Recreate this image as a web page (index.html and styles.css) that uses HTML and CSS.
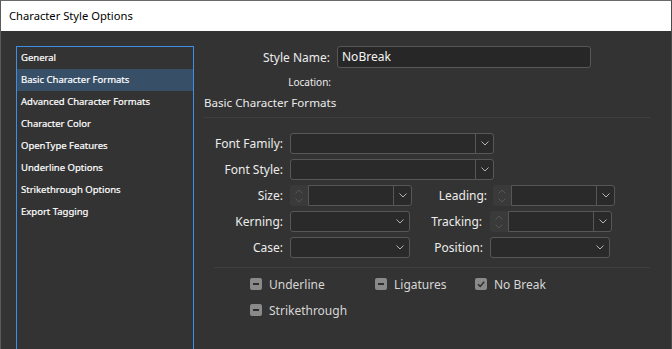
FILE: index.html
```html
<!DOCTYPE html>
<html>
<head>
<meta charset="utf-8">
<link rel="stylesheet" href="styles.css">
</head>
<body>
<div class="window">
  <div class="titlebar">Character Style Options</div>
  <div class="content">
    <ul class="nav">
      <li>General</li>
      <li class="active">Basic Character Formats</li>
      <li>Advanced Character Formats</li>
      <li>Character Color</li>
      <li>OpenType Features</li>
      <li>Underline Options</li>
      <li>Strikethrough Options</li>
      <li>Export Tagging</li>
    </ul>
    <div class="panel">
      <div class="name-row">
        <span class="name-label">Style Name:</span>
        <div class="text-input">NoBreak</div>
      </div>
      <div class="loc-row"><span class="loc-label">Location:</span></div>
      <div class="section-title">Basic Character Formats</div>
      <div class="rule"></div>
      <div class="form">
        <div class="frow">
          <span class="flabel">Font Family:</span>
          <div class="combo wide"><div class="field"></div><div class="arrow split"><svg viewBox="0 0 8 5"><path d="M0.5 0.5 L4 4 L7.5 0.5"/></svg></div></div>
        </div>
        <div class="frow">
          <span class="flabel">Font Style:</span>
          <div class="combo wide"><div class="field"></div><div class="arrow split"><svg viewBox="0 0 8 5"><path d="M0.5 0.5 L4 4 L7.5 0.5"/></svg></div></div>
        </div>
        <div class="frow">
          <span class="flabel">Size:</span>
          <div class="spin-combo">
            <div class="spinner"><svg viewBox="0 0 8 14"><path d="M0.5 4.5 L4 1 L7.5 4.5 M0.5 9.5 L4 13 L7.5 9.5"/></svg></div>
            <div class="combo attached"><div class="field"></div><div class="arrow split"><svg viewBox="0 0 8 5"><path d="M0.5 0.5 L4 4 L7.5 0.5"/></svg></div></div>
          </div>
          <span class="flabel right r1">Leading:</span>
          <div class="spin-combo">
            <div class="spinner"><svg viewBox="0 0 8 14"><path d="M0.5 4.5 L4 1 L7.5 4.5 M0.5 9.5 L4 13 L7.5 9.5"/></svg></div>
            <div class="combo attached"><div class="field"></div><div class="arrow split"><svg viewBox="0 0 8 5"><path d="M0.5 0.5 L4 4 L7.5 0.5"/></svg></div></div>
          </div>
        </div>
        <div class="frow">
          <span class="flabel">Kerning:</span>
          <div class="combo narrow"><div class="field"></div><div class="arrow"><svg viewBox="0 0 8 5"><path d="M0.5 0.5 L4 4 L7.5 0.5"/></svg></div></div>
          <span class="flabel right r2">Tracking:</span>
          <div class="spin-combo">
            <div class="spinner"><svg viewBox="0 0 8 14"><path d="M0.5 4.5 L4 1 L7.5 4.5 M0.5 9.5 L4 13 L7.5 9.5"/></svg></div>
            <div class="combo attached"><div class="field"></div><div class="arrow split"><svg viewBox="0 0 8 5"><path d="M0.5 0.5 L4 4 L7.5 0.5"/></svg></div></div>
          </div>
        </div>
        <div class="frow">
          <span class="flabel">Case:</span>
          <div class="combo narrow"><div class="field"></div><div class="arrow"><svg viewBox="0 0 8 5"><path d="M0.5 0.5 L4 4 L7.5 0.5"/></svg></div></div>
          <span class="flabel right r3">Position:</span>
          <div class="combo narrow"><div class="field"></div><div class="arrow"><svg viewBox="0 0 8 5"><path d="M0.5 0.5 L4 4 L7.5 0.5"/></svg></div></div>
        </div>
      </div>
      <div class="rule rule2"></div>
      <div class="checks">
        <div class="crow">
          <label class="check c1"><span class="box mixed"></span>Underline</label>
          <label class="check c2"><span class="box mixed"></span>Ligatures</label>
          <label class="check"><span class="box"><svg viewBox="0 0 10 10"><path d="M2 5.2 L4.2 7.4 L8.2 2.8"/></svg></span>No Break</label>
        </div>
        <div class="crow">
          <label class="check"><span class="box mixed"></span>Strikethrough</label>
        </div>
      </div>
    </div>
  </div>
</div>
</body>
</html>
```
FILE: styles.css
```css
* { box-sizing: border-box; }
html, body { margin: 0; padding: 0; }
body {
  width: 672px;
  height: 349px;
  overflow: hidden;
  background: #333333;
  font-family: "Noto Sans", "Open Sans", sans-serif;
}
.window {
  height: 349px;
  border-left: 1px solid #5b5b5b;
  border-right: 1px solid #4a4a4a;
  border-top: 1px solid #6a6a6a;
  display: flex;
  flex-direction: column;
}
.titlebar {
  height: 30px;
  background: #ffffff;
  color: #000;
  font-size: 11.2px;
  padding-left: 8px;
  line-height: 30px;
  flex: none;
}
.content {
  flex: 1;
  display: flex;
  padding-top: 15px;
  background: #333333;
}
.nav {
  list-style: none;
  margin: 0 0 0 15px;
  padding: 0;
  width: 178px;
  border: 1px solid #3d8ee6;
  border-bottom: none;
  flex: none;
  font-family: "Noto Sans", sans-serif;
  font-size: 9.5px;
  color: #ffffff;
  -webkit-text-stroke: 0.2px #ffffff;
}
.nav li {
  height: 22px;
  line-height: 22px;
  padding-left: 4px;
}
.nav li.active { background: #384f68; }
.panel {
  flex: 1;
  padding-left: 10px;
  color: #ececec;
  font-size: 12px;
}
.name-row {
  display: flex;
  align-items: center;
  height: 22px;
}
.name-label {
  width: 126px;
  text-align: right;
  margin-right: 7px;
}
.text-input {
  width: 254px;
  height: 22px;
  background: #272727;
  border: 1px solid #575757;
  border-radius: 3px;
  padding-left: 4px;
  line-height: 20px;
  color: #f4f4f4;
}
.loc-row {
  height: 14px;
  margin-top: 7px;
  font-size: 10px;
  line-height: 14px;
}
.loc-label {
  display: inline-block;
  width: 127px;
  text-align: right;
}
.section-title {
  margin-top: 6px;
  height: 16px;
  line-height: 16px;
  font-size: 11.6px;
}
.rule {
  height: 1px;
  background: #3f3f3f;
  margin-top: 6px;
  width: 446px;
}
.form {
  margin-top: 15px;
  display: flex;
  flex-direction: column;
  gap: 5px;
}
.frow {
  display: flex;
  align-items: center;
  height: 21px;
}
.flabel {
  width: 79px;
  text-align: right;
  margin-right: 7px;
  flex: none;
}
.flabel.right { margin-right: 6px; }
.flabel.r1 { width: 75px; }
.flabel.r2 { width: 72px; margin-right: 8px; }
.flabel.r3 { width: 73px; margin-right: 7px; }
.combo {
  display: flex;
  height: 21px;
  border: 1px solid #575757;
  border-radius: 3px;
  background: #2a2a2a;
  flex: none;
}
.combo.wide { width: 204px; }
.combo.narrow { width: 120px; }
.combo .field { flex: 1; }
.combo .arrow {
  width: 18px;
  display: flex;
  align-items: center;
  justify-content: center;
}
.combo .arrow.split { border-left: 1px solid #575757; }
.combo .arrow svg { width: 8px; height: 5px; }
.combo .arrow path, .spinner path {
  fill: none;
  stroke: #b5b5b5;
  stroke-width: 1;
}
.spin-combo {
  display: flex;
  flex: none;
}
.spinner {
  width: 18px;
  height: 21px;
  background: #3a3a3a;
  border-radius: 3px 0 0 3px;
  display: flex;
  align-items: center;
  justify-content: center;
}
.spinner svg { width: 8px; height: 14px; }
.spinner path { stroke: #555555; }
.combo.attached {
  width: 104px;
  border-radius: 0 3px 3px 0;
}
.rule2 {
  margin-top: 9px;
  margin-left: 10px;
  width: 436px;
}
.checks {
  margin-top: 8px;
  padding-left: 46px;
  color: #d6d6d6;
}
.crow {
  display: flex;
  align-items: center;
  height: 16px;
  margin-bottom: 10px;
}
.check {
  display: flex;
  align-items: center;
  gap: 7px;
}
.check.c1 { width: 125px; }
.check.c2 { width: 100px; }
.box {
  width: 12px;
  height: 12px;
  border-radius: 2px;
  background: #8a8a8a;
  display: flex;
  align-items: center;
  justify-content: center;
}
.box.mixed::after {
  content: "";
  width: 6px;
  height: 2px;
  background: #2e2e2e;
}
.box svg { width: 10px; height: 10px; }
.box path {
  fill: none;
  stroke: #2e2e2e;
  stroke-width: 1.5;
}
```
